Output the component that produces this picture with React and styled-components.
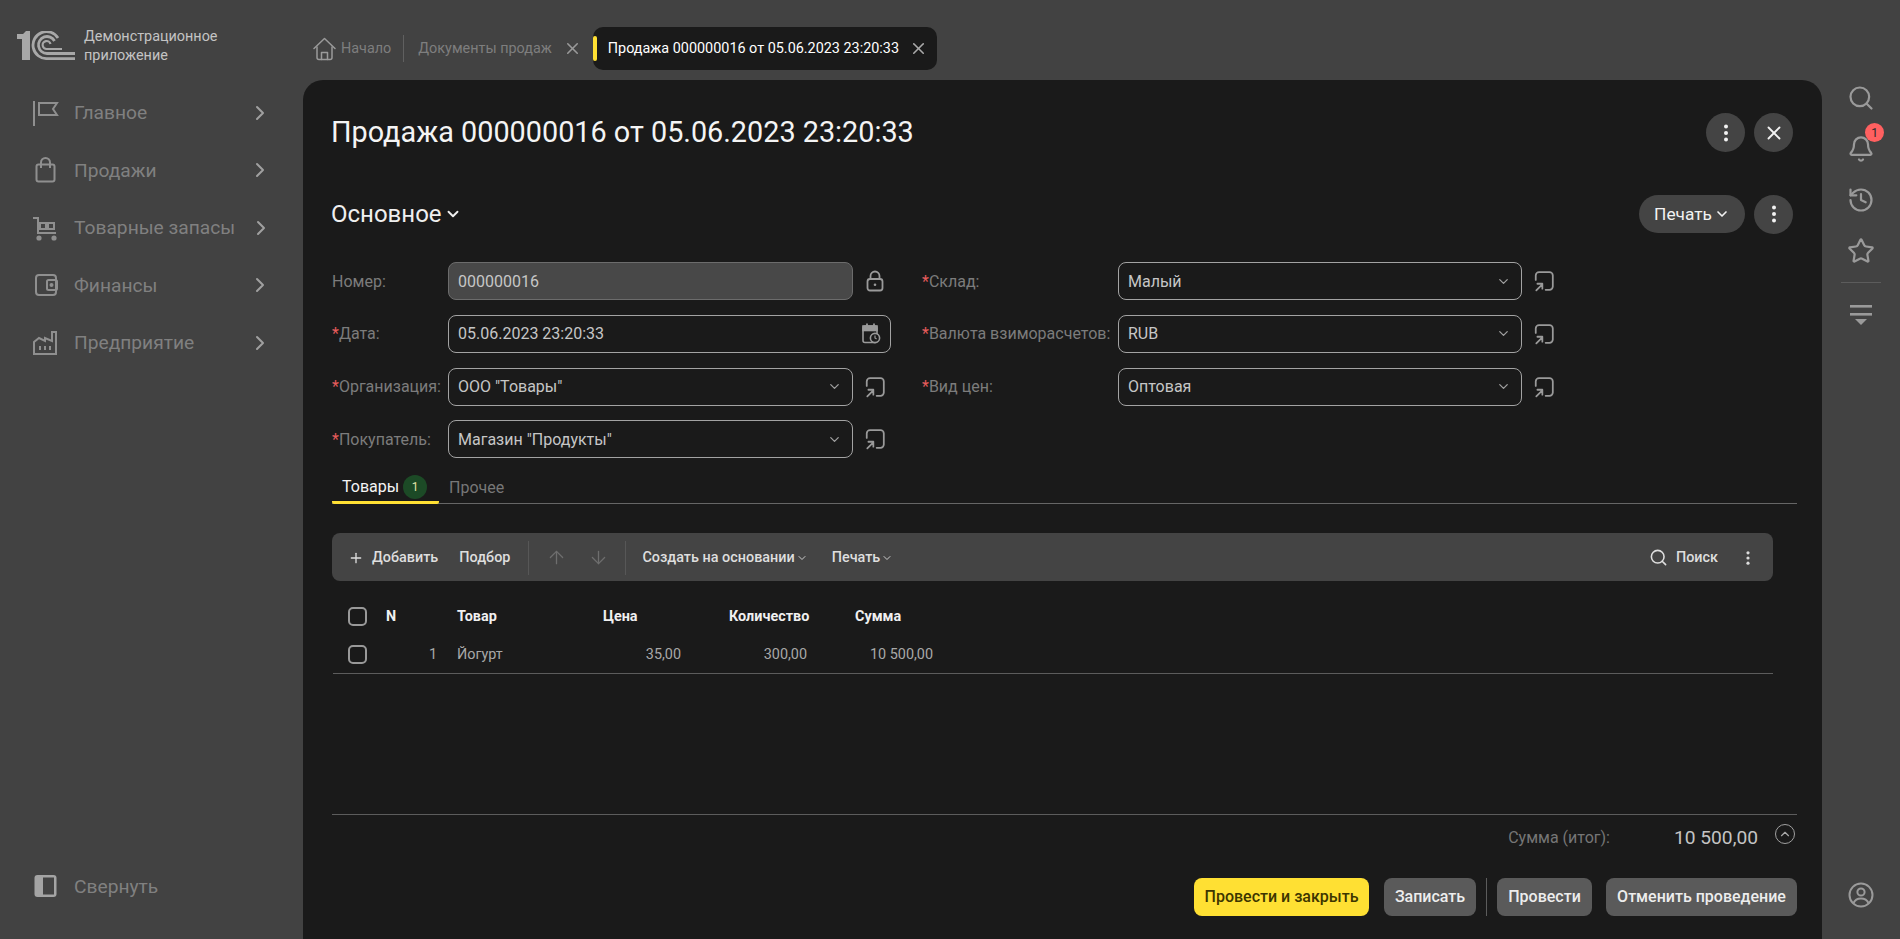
import React from 'react';
import styled, { createGlobalStyle } from 'styled-components';
import { Search, Bell, History, Star, X, Plus, ArrowUp, ArrowDown, ChevronDown, ChevronRight, ChevronUp } from 'lucide-react';

const Global = createGlobalStyle`
  html, body { margin: 0; padding: 0; height: 100%; background: #424242; overflow: hidden; }
  * { box-sizing: border-box; }
  body { font-family: Roboto, "Liberation Sans", sans-serif; }
`;

const Shell = styled.div`display: flex; width: 100%; height: 939px; background: #424242; overflow: hidden;`;

/* sidebar */
const Sidebar = styled.aside`width: 303px; flex: none; display: flex; flex-direction: column; padding-bottom: 24px;`;
const Brand = styled.div`display: flex; align-items: center; gap: 9px; height: 84px; padding: 7px 0 0 17px;`;
const BrandText = styled.div`font-size: 14.4px; line-height: 19px; color: #c4c4c4;`;
const Logo = styled.svg`width: 58px; height: 29px; flex: none;`;
const Menu = styled.nav`display: flex; flex-direction: column;`;
const MenuItem = styled.div`height: 57.5px; display: flex; align-items: center; padding: 0 31px 0 30px; gap: 14px; color: #808080; font-size: 19.2px; white-space: nowrap;`;
const MenuIcon = styled.svg`width: 30px; height: 30px; flex: none; fill: none; stroke: #8f8f8f; stroke-width: 2;`;
const MenuArrow = styled(ChevronRight)`margin-left: auto; width: 24px; height: 24px; color: #a0a0a0; flex: none;`;
const Collapse = styled(MenuItem)`margin-top: auto;`;

/* centre */
const Main = styled.main`flex: 1; min-width: 0; display: flex; flex-direction: column;`;
const TabStrip = styled.div`height: 80px; flex: none; display: flex; align-items: flex-start; padding: 27px 0 0 10px;`;
const HomeTab = styled.div`display: flex; align-items: center; height: 43px; gap: 5px; color: #7e7e7e; font-size: 14.4px; padding-right: 13px; position: relative;
  &::after { content: ''; position: absolute; right: 0; top: 8px; bottom: 8px; width: 1px; background: #606060; }`;
const OpenTab = styled.div`display: flex; align-items: center; height: 43px; color: #7e7e7e; font-size: 14.4px; padding-left: 14px; width: 188.5px;`;
const TabClose = styled(X)`width: 19px; height: 19px; color: ${p => p.$light ? '#aaa' : '#9a9a9a'}; flex: none; margin-left: auto; margin-right: ${p => p.$light ? '9px' : '11px'};`;
const ActiveTab = styled.div`display: flex; align-items: center; width: 344px; height: 43px; border-radius: 10px; background: #1a1a1a; color: #fff; font-size: 14.4px; padding-left: 15px; position: relative;
  &::before { content: ''; position: absolute; left: 0; top: 9px; bottom: 9px; width: 4px; border-radius: 2px; background: #ffe033; }`;

const Panel = styled.section`flex: 1; min-height: 0; background: #1a1a1a; border-radius: 20px 20px 0 0; padding: 33px 25px 23px 29px; display: flex; flex-direction: column;`;
const TitleRow = styled.header`display: flex; align-items: center; height: 39px; padding-right: 4px; gap: 9px;`;
const Title = styled.h1`margin: 0 auto 0 -1px; font-size: 28.8px; font-weight: 400; color: #f4f4f4; line-height: 39px;`;
const RoundButton = styled.button`width: 39px; height: 39px; border-radius: 50%; border: 0; padding: 0; background: #444; color: #f2f2f2; display: flex; align-items: center; justify-content: center; flex: none;`;
const SectionRow = styled.div`display: flex; align-items: center; height: 38px; margin-top: 43px; padding-right: 4px; gap: 9px;`;
const SectionTitle = styled.div`display: flex; align-items: center; gap: 2px; margin: 0 auto 0 -1px; font-size: 24px; color: #efefef;`;
const Pill = styled.button`height: 38px; width: 106px; border: 0; border-radius: 19px; background: #444; color: #f2f2f2; font: 400 17.28px Roboto, sans-serif; display: flex; align-items: center; justify-content: center; gap: 2px;`;

const Form = styled.div`display: flex; margin-top: 29px;`;
const FormColumn = styled.div`width: ${p => p.$w}px; flex: none; display: flex; flex-direction: column; gap: 14.8px;`;
const FieldRow = styled.div`display: flex; align-items: center; height: 38px;`;
const Label = styled.div`width: ${p => p.$w}px; flex: none; font-size: 16px; color: #7c7c7c; white-space: nowrap;`;
const Req = styled.span`color: #e85c5c;`;
const Field = styled.div`width: ${p => p.$w}px; height: 38px; flex: none; border: 1px solid ${p => p.$ro ? '#6c6c6c' : '#a3a3a3'}; border-radius: 8px; background: ${p => p.$ro ? '#484848' : '#1a1a1a'}; color: #c6c6c6; font-size: 16px; padding: 0 9px; display: flex; align-items: center; justify-content: space-between;`;
const SideIcon = styled.div`width: 24px; height: 24px; margin-left: 10px; color: #9a9a9a; display: flex; align-items: center; justify-content: center;`;
const Caret = styled(ChevronDown)`width: 15px; height: 15px; color: #a0a0a0; margin-right: 1px;`;

const Tabs = styled.div`margin-top: 9px; height: 37px; flex: none; display: flex; border-bottom: 1px solid #666;`;
const Tab = styled.div`height: 37px; display: flex; align-items: center; padding: 3px 10px 0; gap: 4px; font-size: 16px; color: ${p => p.$active ? '#f4f4f4' : '#777'}; width: ${p => p.$w ? p.$w + 'px' : 'auto'}; ${p => p.$active && 'border-bottom: 3px solid #ffe033; border-radius: 0 0 2px 2px; padding-top: 7px; padding-bottom: 2px;'}`;
const Count = styled.span`width: 24px; height: 24px; border-radius: 50%; background: #1c4a26; color: #e2e2a8; font-size: 12px; display: flex; align-items: center; justify-content: center; flex: none;`;

const Toolbar = styled.div`margin: 29px 24px 0 0; height: 48px; flex: none; border-radius: 8px; background: #444; display: flex; align-items: center; padding: 1px 17px 0 16px; font-size: 14.4px; font-weight: 500; color: #dedede;`;
const ToolItem = styled.div`display: flex; align-items: center; gap: ${p => p.$gap ?? 8}px; margin-left: ${p => p.$ml ?? 0}px; white-space: nowrap;`;
const ToolEnd = styled(ToolItem)`margin-left: auto;`;
const ToolSep = styled.div`width: 1px; height: 34px; background: #575757; margin-left: ${p => p.$ml}px;`;
const Mini = styled(ChevronDown)`width: 12px; height: 12px; color: #ccc;`;

const Table = styled.div`margin: 0 24px 0 0; flex: 1; min-height: 0;`;
const Head = styled.div`display: grid; grid-template-columns: 54px 71px 146px 126px 126px 82px 1fr; align-items: center; height: 38px; margin-top: 16px; font-size: 14.4px; font-weight: 700; color: #f0f0f0;`;
const Row = styled.div`display: grid; grid-template-columns: 53px 71px 144px 128px 126px 82px 1fr; align-items: center; height: 39px; font-size: 14.4px; color: #a8a8a8; border-bottom: 1px solid #5c5c5c; margin-left: 1px;`;
const NumCell = styled.div`text-align: right; padding-right: ${p => p.$pr}px;`;
const Check = styled.div`width: 19px; height: 19px; border: 2px solid #999; border-radius: 5px; margin-left: ${p => p.$ml ?? 16}px;`;

const Totals = styled.div`flex: none; border-top: 1px solid #5c5c5c; height: 64px; padding-top: 10px; display: flex; align-items: flex-start; justify-content: flex-end;`;
const TotalLabel = styled.span`font-size: 16px; line-height: 26px; color: #767676; margin-right: 64px;`;
const TotalValue = styled.span`font-size: 19.2px; line-height: 26px; color: #c4c4c4;`;
const TotalToggle = styled.div`width: 20px; height: 20px; margin: -1px 2px 0 17px; border: 1.5px solid #a0a0a0; border-radius: 50%; display: flex; align-items: center; justify-content: center; color: #a8a8a8;`;
const Actions = styled.div`flex: none; display: flex; justify-content: flex-end; align-items: stretch; height: 38px;`;
const Action = styled.button`border: 0; border-radius: 8px; height: 38px; width: ${p => p.$w}px; margin-left: ${p => p.$ml ?? 15}px; background: ${p => p.$primary ? '#ffe033' : '#5a5a5a'}; color: ${p => p.$primary ? '#3d3600' : '#ededed'}; font: 500 16px Roboto, sans-serif; padding: 0 0 1px; white-space: nowrap;`;
const ActionSep = styled.div`width: 1px; background: #5c5c5c; margin: 0 -5px 0 10px;`;

/* right rail */
const Rail = styled.aside`width: 78px; flex: none; display: flex; flex-direction: column; align-items: center; padding: 84px 0 30px; color: #9a9a9a;`;
const RailIcon = styled.div`width: 28px; height: 28px; margin-bottom: 23px; flex: none; display: flex; align-items: center; justify-content: center; position: relative;`;
const Badge = styled.span`position: absolute; top: -12px; right: -9px; width: 19px; height: 19px; border-radius: 50%; background: #ff6060; color: #2a2a2a; font-size: 12px; display: flex; align-items: center; justify-content: center;`;
const RailSep = styled.div`width: 40px; height: 1px; background: #5c5c5c; margin: -6px 0 19px; flex: none;`;
const RailBottom = styled(RailIcon)`margin: auto 0 0;`;

const Dots = ({ s = 20, c = '#f2f2f2' }) => (
  <svg width={s} height={s} viewBox="0 0 20 20" fill={c}><circle cx="10" cy="3.5" r="2" /><circle cx="10" cy="10" r="2" /><circle cx="10" cy="16.5" r="2" /></svg>
);
const OpenForm = () => (
  <svg width="22" height="22" viewBox="0 0 20 20" fill="none" stroke="#9a9a9a" strokeWidth="1.6" strokeLinecap="round" strokeLinejoin="round">
    <path d="M2.5 9V5a3 3 0 0 1 3-3H15a3 3 0 0 1 3 3v10a3 3 0 0 1-3 3h-3.5" />
    <path d="M3 18.5l5.5-5.5M4 12.5h4.5V17" />
  </svg>
);
const LockIcon = () => (
  <svg width="20" height="22" viewBox="0 0 20 22" fill="none" stroke="#9a9a9a" strokeWidth="1.8">
    <rect x="2.5" y="9" width="15" height="11.5" rx="2.5" />
    <path d="M5.5 9V6a4.5 4.5 0 0 1 9 0v3" />
    <circle cx="10" cy="14.8" r="1.3" fill="#9a9a9a" stroke="none" />
  </svg>
);
const CalendarIcon = () => (
  <svg width="20" height="21" viewBox="0 0 20 21" fill="none" stroke="#9a9a9a" strokeWidth="1.6">
    <path d="M6 .5v4M13 .5v4" strokeWidth="1.8" />
    <rect x="2" y="3" width="14" height="16.5" rx="2" />
    <rect x="2" y="3" width="14" height="4.5" fill="#9a9a9a" />
    <circle cx="14" cy="15" r="4.6" fill="#1a1a1a" />
    <path d="M14 12.6V15l1.6 1" strokeWidth="1.2" />
  </svg>
);
const Home = () => (
  <svg width="23" height="24" viewBox="0 0 23 24" fill="none" stroke="#9a9a9a" strokeWidth="1.5" strokeLinejoin="round" strokeLinecap="round">
    <path d="M1 11.5L11.5 1.5 22 11.5" /><path d="M4 10v10.5a2 2 0 0 0 2 2h11a2 2 0 0 0 2-2V10" /><path d="M8.5 22.5v-7h6v7" />
  </svg>
);
const UserRound = () => (
  <svg width="26" height="26" viewBox="0 0 26 26" fill="none" stroke="#9a9a9a" strokeWidth="2">
    <circle cx="13" cy="13" r="11.5" /><circle cx="13" cy="10" r="3.6" /><path d="M5.5 21c1.5-3.5 4-4.6 7.5-4.6s6 1.1 7.5 4.6" />
  </svg>
);

const menu = [
  ['Главное', <><path d="M4 3v25" /><path d="M9 5h18l-4 6 4 6H9z" /></>],
  ['Продажи', <><rect x="6.5" y="9.5" width="18" height="17" rx="2" /><path d="M11 13V7.5a4.5 4.5 0 0 1 9 0V13" /></>],
  ['Товарные запасы', <><path d="M3 5h5v15h18" /><rect x="10" y="10" width="6" height="6" /><rect x="18" y="10" width="6" height="6" /><circle cx="9" cy="25" r="1.6" fill="#8f8f8f" /><circle cx="24" cy="25" r="1.6" fill="#8f8f8f" /></>],
  ['Финансы', <><rect x="6" y="5" width="20" height="20" rx="3" /><rect x="17" y="10" width="10" height="10" rx="1.5" /><circle cx="21.5" cy="15" r="1" /></>],
  ['Предприятие', <><path d="M4 26h22V4h-4v9l-7-3v3l-6-3-5 4z" /><path d="M10 18v4M15 18v4M20 18v4" /></>],
];

const Labelled = ({ req, w, children }) => <Label $w={w}>{req && <Req>*</Req>}{children}</Label>;

const SelectRow = ({ label, lw, fw, value }) => (
  <FieldRow>
    <Labelled req w={lw}>{label}</Labelled>
    <Field $w={fw}>{value}<Caret /></Field>
    <SideIcon><OpenForm /></SideIcon>
  </FieldRow>
);

export default function App() {
  return (
    <Shell>
      <Global />
      <Sidebar>
        <Brand>
          <Logo viewBox="0 0 58 29" fill="none" stroke="#a8a8a8" strokeWidth="2.8">
            <path d="M0 3h6l3-3h4v29H5V8H0z" fill="#a8a8a8" stroke="none" />
            <path d="M41 7A13.5 13.5 0 1 0 30 27.6H58" />
            <path d="M37.5 10A8.5 8.5 0 1 0 30 22.5H58" />
            <path d="M33.5 13A4 4 0 1 0 30 18H45" strokeWidth="2.2" />
          </Logo>
          <BrandText>Демонстрационное<br />приложение</BrandText>
        </Brand>
        <Menu>
          {menu.map(([t, icon]) => (
            <MenuItem key={t}>
              <MenuIcon viewBox="0 0 30 30">{icon}</MenuIcon>
              {t}
              <MenuArrow />
            </MenuItem>
          ))}
        </Menu>
        <Collapse>
          <svg width="30" height="30" viewBox="0 0 30 30"><rect x="4.5" y="4" width="22" height="22" rx="3" fill="#a4a4a4" /><rect x="13" y="6.5" width="11" height="17" fill="#434343" /></svg>
          Свернуть
        </Collapse>
      </Sidebar>

      <Main>
        <TabStrip>
          <HomeTab><Home />Начало</HomeTab>
          <OpenTab>Документы продаж<TabClose /></OpenTab>
          <ActiveTab>Продажа 000000016 от 05.06.2023 23:20:33<TabClose $light /></ActiveTab>
        </TabStrip>
        <Panel>
          <TitleRow>
            <Title>Продажа 000000016 от 05.06.2023 23:20:33</Title>
            <RoundButton><Dots /></RoundButton>
            <RoundButton><X size={22} /></RoundButton>
          </TitleRow>
          <SectionRow>
            <SectionTitle>Основное<ChevronDown size={18} strokeWidth={2.5} /></SectionTitle>
            <Pill>Печать<ChevronDown size={16} strokeWidth={2.5} /></Pill>
            <RoundButton><Dots /></RoundButton>
          </SectionRow>

          <Form>
            <FormColumn $w={590}>
              <FieldRow>
                <Labelled w={116}>Номер:</Labelled>
                <Field $w={405} $ro>000000016</Field>
                <SideIcon><LockIcon /></SideIcon>
              </FieldRow>
              <FieldRow>
                <Labelled req w={116}>Дата:</Labelled>
                <Field $w={443}>05.06.2023 23:20:33<CalendarIcon /></Field>
              </FieldRow>
              <SelectRow label="Организация:" lw={116} fw={405} value={'ООО "Товары"'} />
              <SelectRow label="Покупатель:" lw={116} fw={405} value={'Магазин "Продукты"'} />
            </FormColumn>
            <FormColumn $w={640}>
              <SelectRow label="Склад:" lw={196} fw={404} value="Малый" />
              <SelectRow label="Валюта взиморасчетов:" lw={196} fw={404} value="RUB" />
              <SelectRow label="Вид цен:" lw={196} fw={404} value="Оптовая" />
            </FormColumn>
          </Form>

          <Tabs>
            <Tab $active $w={107}>Товары<Count>1</Count></Tab>
            <Tab>Прочее</Tab>
          </Tabs>

          <Toolbar>
            <ToolItem><Plus size={16} />Добавить</ToolItem>
            <ToolItem $ml={21}>Подбор</ToolItem>
            <ToolSep $ml={18} />
            <ToolItem $ml={17} $gap={21}><ArrowUp size={21} strokeWidth={1.5} color="#6e6e6e" /><ArrowDown size={21} strokeWidth={1.5} color="#6e6e6e" /></ToolItem>
            <ToolSep $ml={16} />
            <ToolItem $ml={16} $gap={1}>Создать на основании<Mini /></ToolItem>
            <ToolItem $ml={24} $gap={1}>Печать<Mini /></ToolItem>
            <ToolEnd $gap={8}><Search size={19} />Поиск</ToolEnd>
            <ToolItem $ml={22}><Dots s={16} c="#ddd" /></ToolItem>
          </Toolbar>

          <Table>
            <Head>
              <Check />
              <div>N</div>
              <div>Товар</div>
              <div>Цена</div>
              <div>Количество</div>
              <div>Сумма</div>
            </Head>
            <Row>
              <Check $ml={15} />
              <NumCell $pr={20}>1</NumCell>
              <div>Йогурт</div>
              <NumCell $pr={48}>35,00</NumCell>
              <NumCell $pr={48}>300,00</NumCell>
              <NumCell $pr={4}>10 500,00</NumCell>
            </Row>
          </Table>

          <Totals>
            <TotalLabel>Сумма (итог):</TotalLabel>
            <TotalValue>10 500,00</TotalValue>
            <TotalToggle><ChevronUp size={14} /></TotalToggle>
          </Totals>
          <Actions>
            <Action $primary $w={175}>Провести и закрыть</Action>
            <Action $w={92}>Записать</Action>
            <ActionSep />
            <Action $w={95}>Провести</Action>
            <Action $w={191} $ml={14}>Отменить проведение</Action>
          </Actions>
        </Panel>
      </Main>

      <Rail>
        <RailIcon><Search size={28} strokeWidth={1.9} /></RailIcon>
        <RailIcon><Bell size={28} strokeWidth={1.9} /><Badge>1</Badge></RailIcon>
        <RailIcon><History size={28} strokeWidth={1.9} /></RailIcon>
        <RailIcon><Star size={28} strokeWidth={1.9} /></RailIcon>
        <RailSep />
        <RailIcon>
          <svg width="24" height="22" viewBox="0 0 24 22" fill="#9a9a9a"><rect x="1" y="0" width="22" height="2.6" /><rect x="1" y="8" width="22" height="2.6" /><path d="M6 14h12l-6 6z" /></svg>
        </RailIcon>
        <RailBottom><UserRound /></RailBottom>
      </Rail>
    </Shell>
  );
}
